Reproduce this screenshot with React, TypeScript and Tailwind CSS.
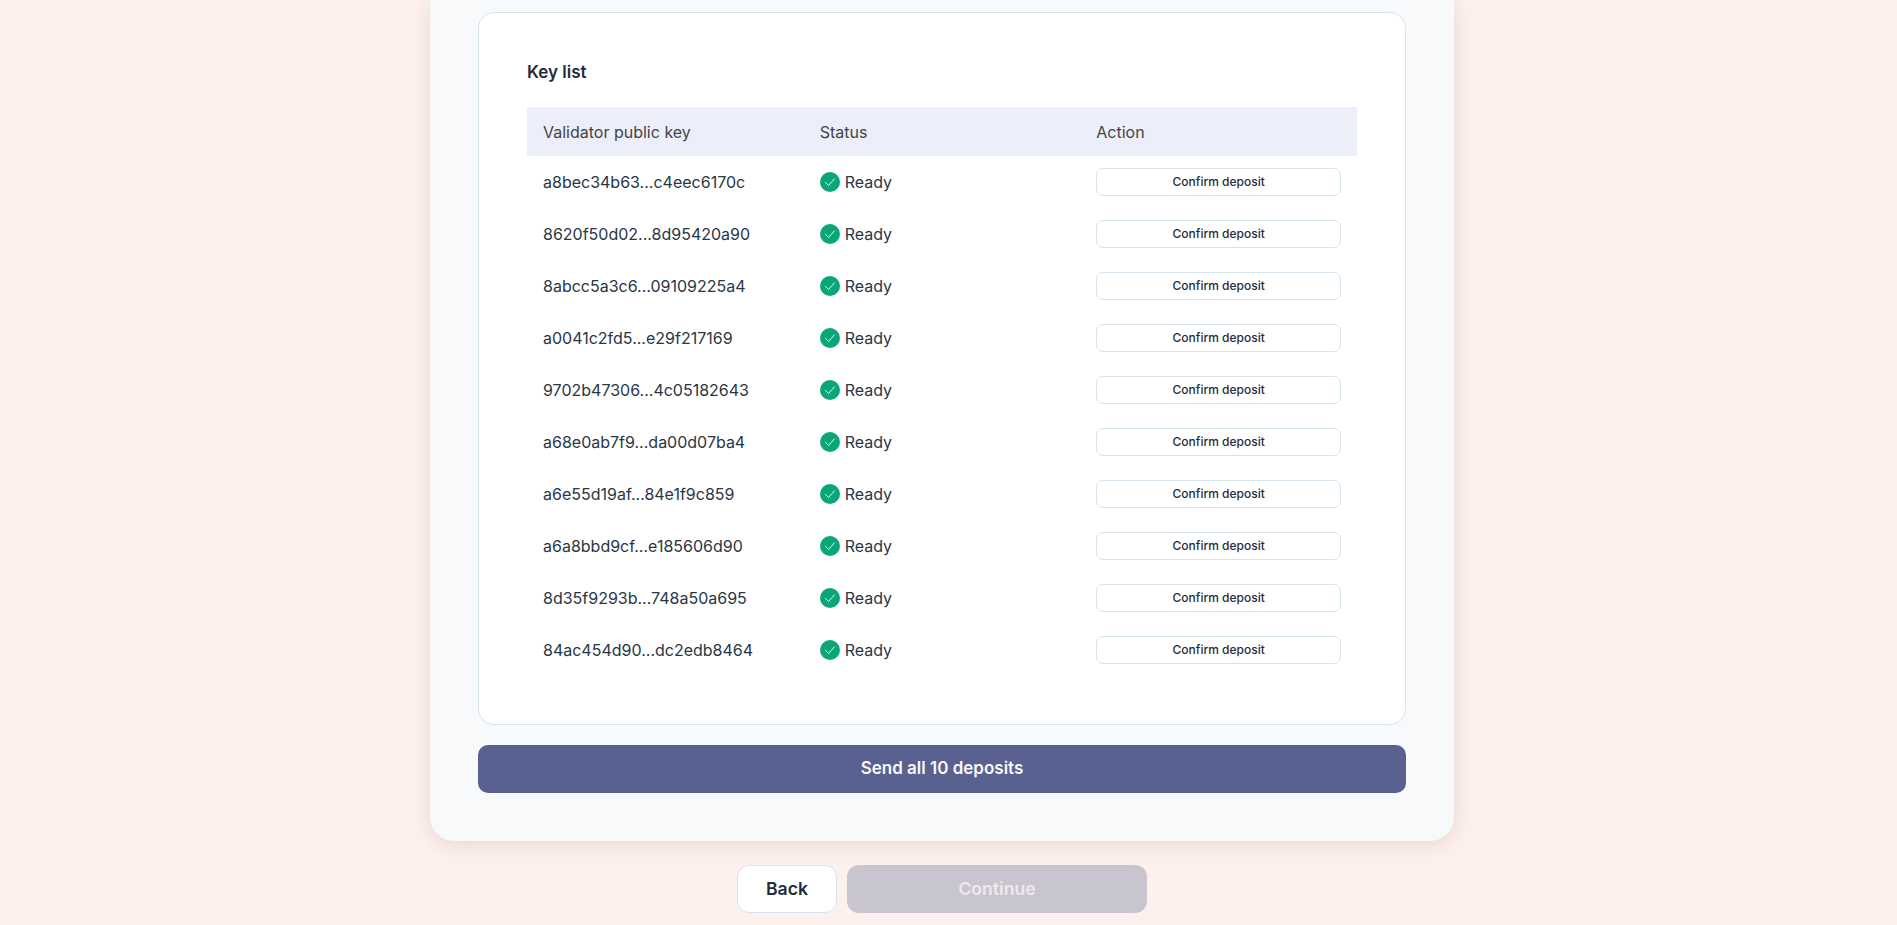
const keys = [
  "a8bec34b63...c4eec6170c",
  "8620f50d02...8d95420a90",
  "8abcc5a3c6...09109225a4",
  "a0041c2fd5...e29f217169",
  "9702b47306...4c05182643",
  "a68e0ab7f9...da00d07ba4",
  "a6e55d19af...84e1f9c859",
  "a6a8bbd9cf...e185606d90",
  "8d35f9293b...748a50a695",
  "84ac454d90...dc2edb8464",
];

function ReadyIcon() {
  return (
    <svg width="20" height="20" viewBox="0 0 20 20" fill="none" className="shrink-0">
      <circle cx="10" cy="10" r="10" fill="#0ba678" />
      <path d="M5.6 10.4 8.6 13.4 14.4 6.9" stroke="#ffffff" strokeWidth="0.9" strokeLinecap="round" strokeLinejoin="round" />
    </svg>
  );
}

export default function App() {
  return (
    <div className="h-[925px] overflow-hidden bg-[#fdf1ee] pr-[13px] font-['Inter',sans-serif] antialiased">
      <div className="mx-auto flex w-[1024px] flex-col items-center">
        <div className="w-full rounded-b-3xl bg-[#f8f9fb] px-12 pb-12 pt-3 shadow-[0_4px_20px_rgba(120,60,40,0.15)]">
          <div className="rounded-2xl border border-[#d6e4ee] bg-white p-12">
            <h2 className="mb-6 text-[17px] font-semibold leading-[22px] text-[#1f2d3d]">Key list</h2>
            <div className="grid h-[49px] grid-cols-3 items-center bg-[#eceff9] text-base text-[#444444]">
              <div className="px-4">Validator public key</div>
              <div className="px-4">Status</div>
              <div className="px-4">Action</div>
            </div>
            {keys.map((k) => (
              <div key={k} className="grid h-[52px] grid-cols-3 items-center text-base text-[#2a3644]">
                <div className="px-4">{k}</div>
                <div className="flex items-center gap-[5px] px-4">
                  <ReadyIcon />
                  <span>Ready</span>
                </div>
                <div className="px-4">
                  <button className="h-7 w-full rounded-[7px] border border-[#d6e4ee] bg-white text-xs font-medium text-[#1f2d3d]">
                    Confirm deposit
                  </button>
                </div>
              </div>
            ))}
          </div>
          <button className="mt-5 h-12 w-full rounded-[10px] bg-[#586190] text-[17px] font-semibold text-[#f7f8fa]">
            Send all 10 deposits
          </button>
        </div>
        <div className="mt-6 flex gap-2.5">
          <button className="h-12 w-[100px] rounded-xl border border-[#d6e4ee] bg-white text-[17.6px] font-semibold text-[#1f2d3d]">
            Back
          </button>
          <button className="h-12 w-[300px] rounded-xl bg-[#c8c5d1] text-[17.6px] font-semibold text-[#efe9ec]">
            Continue
          </button>
        </div>
      </div>
    </div>
  );
}
